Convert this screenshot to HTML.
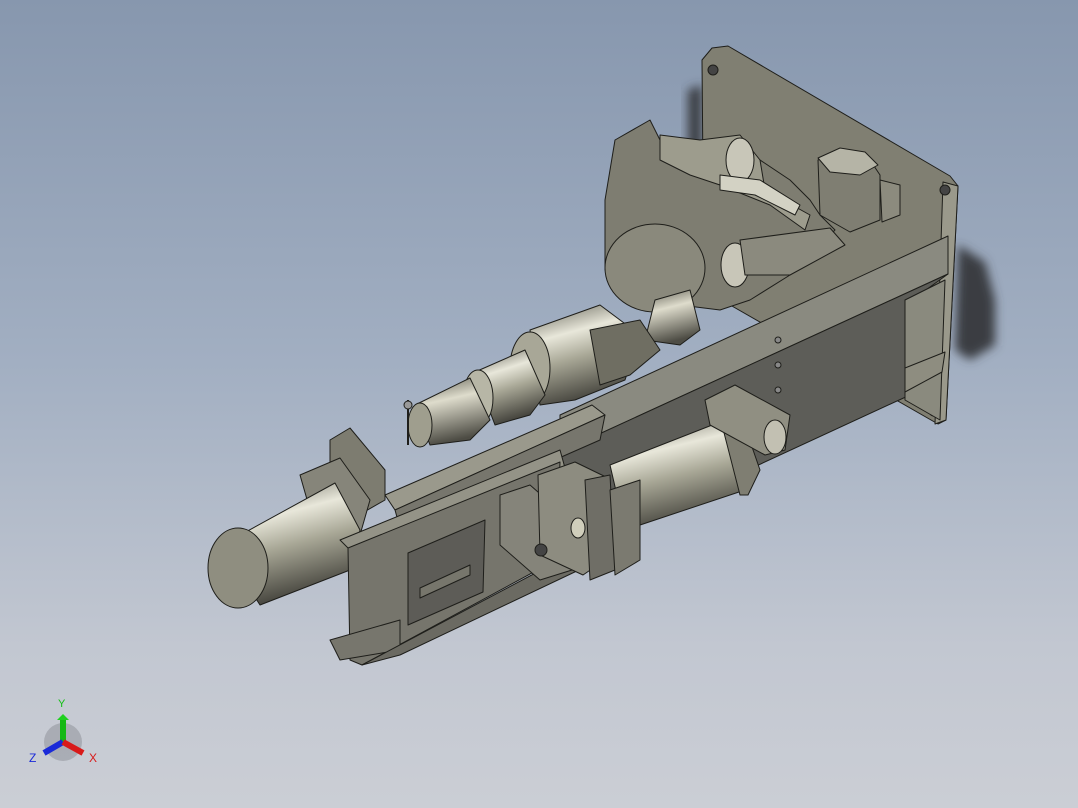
<!DOCTYPE html>
<html><head><meta charset="utf-8"><style>
html,body{margin:0;padding:0;width:1078px;height:808px;overflow:hidden}
body{background:linear-gradient(180deg,#8797ae 0%,#a2afc2 45%,#c2c7d1 80%,#cbced5 100%)}
svg{position:absolute;left:0;top:0}
</style></head><body>
<svg width="1078" height="808" viewBox="0 0 1078 808" xmlns="http://www.w3.org/2000/svg">
<defs>
<linearGradient id="cyl" x1="0" y1="0" x2="0.3" y2="1">
<stop offset="0" stop-color="#5e5d52"/><stop offset="0.35" stop-color="#e8e7da"/><stop offset="0.6" stop-color="#a8a796"/><stop offset="1" stop-color="#46453e"/></linearGradient>
<linearGradient id="cyl2" x1="0" y1="0" x2="0.25" y2="1">
<stop offset="0" stop-color="#5e5d52"/><stop offset="0.4" stop-color="#dedccc"/><stop offset="1" stop-color="#4d4c44"/></linearGradient>
<filter id="bl" x="-50%" y="-50%" width="200%" height="200%"><feGaussianBlur stdDeviation="5"/></filter>
</defs>
<polygon points="958,245 985,262 995,300 995,345 970,360 955,350" fill="#3a3c42" filter="url(#bl)"/>
<polygon points="688,90 702,85 702,300 688,290" fill="#3a3c42" filter="url(#bl)"/>
<g stroke="#1e1e1a" stroke-width="1" stroke-linejoin="round">
<!-- back plate -->
<polygon points="712,48 728,46 950,176 958,186 946,420 938,424 704,290 702,60" fill="#807f72"/>
<polygon points="943,182 958,186 946,420 935,424" fill="#9a998b"/>
<circle cx="713" cy="70" r="5" fill="#444"/><circle cx="945" cy="190" r="5" fill="#444"/><circle cx="934" cy="411" r="5" fill="#444"/>
<!-- upper mechanism -->
<polygon points="615,140 650,120 665,150 700,140 745,150 790,180 810,200 820,215 835,230 790,275 750,300 720,310 640,300 605,270 605,200" fill="#7e7d71"/>
<polygon points="660,135 700,140 740,135 760,160 765,190 810,215 805,230 770,205 720,185 690,175 660,160" fill="#9d9c8d"/>
<ellipse cx="740" cy="160" rx="14" ry="22" fill="#c8c6b8"/>
<polygon points="720,175 760,180 800,205 795,215 755,195 720,190" fill="#d3d2c4"/>
<polygon points="818,160 840,150 870,160 880,175 880,220 850,232 820,215" fill="#7f7e72"/>
<polygon points="818,158 840,148 865,152 878,165 860,175 830,172" fill="#b5b4a6"/>
<polygon points="880,180 900,185 900,215 882,222" fill="#8c8b7e"/>
<ellipse cx="655" cy="268" rx="50" ry="44" fill="#8a897c"/>
<ellipse cx="735" cy="265" rx="14" ry="22" fill="#c8c6b8"/>
<polygon points="740,240 830,228 845,245 790,275 745,275" fill="#8b8a7e"/>
<polygon points="655,300 690,290 700,330 680,345 645,340" fill="url(#cyl2)"/>
<!-- spindle cylinders -->
<polygon points="530,330 600,305 640,335 625,380 575,400 540,405" fill="url(#cyl)"/>
<ellipse cx="530" cy="368" rx="20" ry="36" fill="#a8a797"/>
<polygon points="475,372 525,350 545,395 530,415 495,425" fill="url(#cyl)"/>
<ellipse cx="478" cy="398" rx="15" ry="28" fill="#b7b6a6"/>
<polygon points="415,405 470,378 490,420 470,440 430,445" fill="url(#cyl2)"/>
<ellipse cx="420" cy="425" rx="12" ry="22" fill="#9f9e8e"/>
<polygon points="590,330 640,320 660,350 630,375 600,385" fill="#6f6e62"/>
<line x1="408" y1="400" x2="408" y2="445" stroke-width="2"/>
<circle cx="408" cy="405" r="4" fill="#999"/>
<!-- main beam flange and web -->
<polygon points="560,415 948,236 948,274 560,452" fill="#8a8a80"/>
<polygon points="560,452 948,274 912,300 910,395 700,492 560,495" fill="#5d5d58"/>
<polygon points="905,300 945,280 940,420 905,400" fill="#8a8a7e"/>
<polygon points="905,368 945,352 942,372 905,392" fill="#8e8d80"/>
<circle cx="778" cy="340" r="3" fill="#888"/><circle cx="778" cy="365" r="3" fill="#888"/><circle cx="778" cy="390" r="3" fill="#888"/>
<!-- actuator left parts -->
<polygon points="330,440 350,428 385,470 385,500 350,520 330,485" fill="#7d7c70"/>
<polygon points="300,475 340,458 370,500 360,535 320,545" fill="#86857a"/>
<!-- motor -->
<polygon points="222,545 335,483 360,530 350,570 260,605" fill="url(#cyl)"/>
<ellipse cx="238" cy="568" rx="30" ry="40" fill="#8f8e80"/>
<!-- arm beam -->
<polygon points="385,495 592,405 605,415 395,510" fill="#9a998c"/>
<polygon points="395,510 605,415 600,440 400,528" fill="#77766d"/>
<!-- front frame -->
<polygon points="340,540 560,450 565,468 355,555" fill="#949387"/>
<polygon points="348,548 560,462 556,560 362,665 350,660" fill="#76756c"/>
<polygon points="408,553 485,520 483,592 408,625" fill="#5d5c57"/>
<polygon points="420,588 470,565 470,575 420,598" fill="#77766c"/>
<polygon points="330,640 400,620 400,650 340,660" fill="#77766d"/>
<polygon points="362,665 560,560 600,560 400,655" fill="#6b6a62"/>
<!-- pneumatic cylinder -->
<polygon points="610,465 725,420 742,440 745,490 625,530" fill="url(#cyl)"/>
<polygon points="722,425 742,418 760,470 748,495 740,495" fill="#7f7e72"/>
<polygon points="705,400 735,385 790,415 785,450 765,455 710,425" fill="#908f82"/>
<ellipse cx="775" cy="437" rx="11" ry="17" fill="#c2c0b2"/>
<!-- block -->
<polygon points="500,495 530,485 570,520 572,570 540,580 500,545" fill="#85847a"/>
<polygon points="538,475 575,462 608,478 605,560 583,575 540,555" fill="#8d8c80"/>
<polygon points="585,480 610,475 615,570 590,580" fill="#6f6e66"/>
<polygon points="610,490 640,480 640,560 615,575" fill="#7b7a70"/>
<circle cx="541" cy="550" r="6" fill="#444"/>
<ellipse cx="578" cy="528" rx="7" ry="10" fill="#d0cebb"/>
</g>
<!-- triad -->
<g>
<circle cx="63" cy="742" r="19" fill="#8f939b" opacity="0.55"/>
<path d="M63 742 L63 718" stroke="#14b814" stroke-width="6"/>
<polygon points="57,720 63,714 69,720" fill="#20d020"/>
<path d="M63 742 L44 753" stroke="#1a2ad8" stroke-width="6"/>
<path d="M63 742 L83 753" stroke="#d81a1a" stroke-width="6"/>
<text x="58" y="707" font-family="Liberation Sans,sans-serif" font-size="11" fill="#10c010">Y</text>
<text x="29" y="762" font-family="Liberation Sans,sans-serif" font-size="12" fill="#1a2ad8">Z</text>
<text x="89" y="762" font-family="Liberation Sans,sans-serif" font-size="12" fill="#d81a1a">X</text>
</g>
</svg>
</body></html>
